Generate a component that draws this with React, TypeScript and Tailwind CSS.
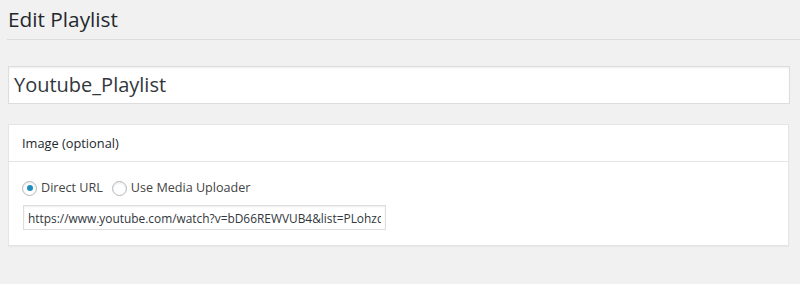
const FONT = "font-['Open_Sans','Noto_Sans',sans-serif]";

const Radio = ({ checked, label }: { checked?: boolean; label: string }) => (
  <label className="flex items-center gap-[4px]">
    <span className="flex size-[15px] items-center justify-center rounded-full border border-[#b4b9be] bg-white shadow-[inset_0_1px_2px_rgba(0,0,0,0.1)]">
      {checked && <span className="size-[6px] rounded-full bg-[#1e8cbe]" />}
    </span>
    <span className="text-[12.6px] leading-[20px] text-[#444]">{label}</span>
  </label>
);

export default function App() {
  return (
    <div className={`min-h-[284px] w-[800px] bg-[#f1f1f1] ${FONT}`}>
      <div className="ml-[7px] h-[40px] border-b border-[#dcdcdc] pl-px pt-[4px]">
        <h1 className="text-[20.8px] leading-[30px] font-normal text-[#23282d]">Edit Playlist</h1>
      </div>

      <div className="pl-2 pr-[10px] pt-[26px]">
        <div className="flex h-[38px] items-center border border-[#dddddd] bg-white pl-[5px] shadow-[inset_0_1px_2px_rgba(0,0,0,0.07)]">
          <span className="text-[20px] text-[#32373c]">Youtube_Playlist</span>
        </div>

        <div className="mt-[20px] mr-px border border-[#e5e5e5] bg-white shadow-[0_1px_1px_rgba(0,0,0,0.04)]">
          <div className="h-[37px] border-b border-[#e5e5e5] px-[13px] pt-[8px]">
            <h2 className="text-[12.8px] leading-[20px] text-[#23282d]">Image (optional)</h2>
          </div>
          <div className="px-[13px] pt-[16px] pb-[15px]">
            <div className="flex items-center gap-[9px]">
              <Radio checked label="Direct URL" />
              <Radio label="Use Media Uploader" />
            </div>
            <input
              readOnly
              value="https://www.youtube.com/watch?v=bD66REWVUB4&list=PLohzqSEcRJZM0cH1qV8"
              className="mt-[7px] ml-px block h-[25px] w-[363px] border border-[#dddddd] px-[4px] text-[11.9px] text-[#32373c] shadow-[inset_0_1px_2px_rgba(0,0,0,0.07)] outline-none"
            />
          </div>
        </div>
      </div>
    </div>
  );
}
